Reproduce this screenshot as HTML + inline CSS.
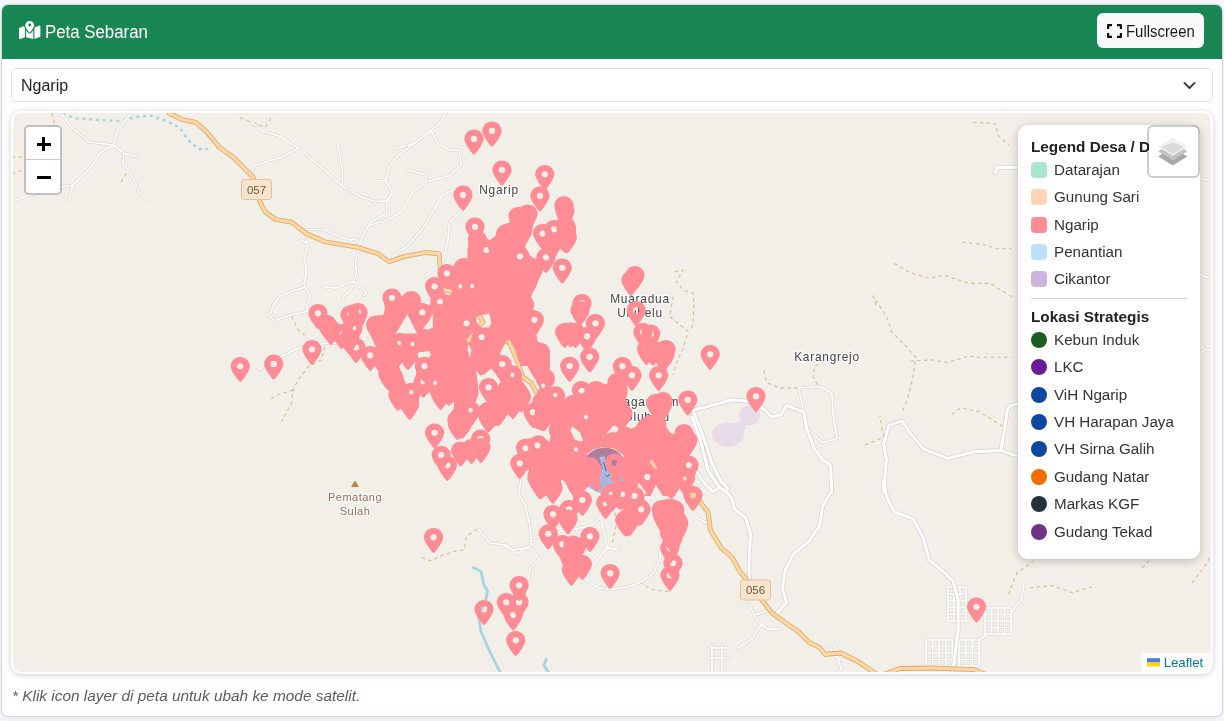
<!DOCTYPE html>
<html><head><meta charset="utf-8">
<style>
*{box-sizing:border-box}
html,body{margin:0;padding:0}
body{width:1224px;height:721px;overflow:hidden;background:#f4f6fb;font-family:"Liberation Sans",sans-serif;color:#212529;position:relative}
.card{position:absolute;left:2px;top:4.500px;width:1220px;height:711.500px;background:#fff;border-radius:6px;box-shadow:0 0 0 1px #d3d6db,0 2px 6px rgba(0,0,0,.08);overflow:hidden}
.hdr{position:absolute;left:0;top:0;width:1220px;height:54.300px;background:#198754;color:#fff}
.hdr .ttl{position:absolute;left:43.200px;top:16px;font-size:18.300px;line-height:22px;white-space:nowrap;transform:scaleX(.92);transform-origin:0 50%}
.hdr svg.mapi{position:absolute;left:17.200px;top:16.300px}
.fsbtn{position:absolute;left:1095px;top:8.400px;width:107px;height:35.100px;background:#f8f9fa;border-radius:6px;color:#000;font-size:16px}
.fsbtn span{position:absolute;left:28.600px;color:#1a1a1a;top:8px;line-height:20px;font-size:16.300px;transform:scaleX(.915);transform-origin:0 50%}
.fsbtn svg{position:absolute;left:10px;top:11px}
.sel{position:absolute;left:9.250px;top:63.500px;width:1201.500px;height:34.200px;border:1px solid #dee2e6;border-radius:5px;background:#fff}
.sel span{position:absolute;left:9px;top:6.600px;font-size:16px;line-height:20px;color:#212529}
.sel svg{position:absolute;right:15.500px;top:11.500px}
.map{position:absolute;left:9px;top:106.500px;width:1202px;height:563px;border:2px solid #fff;border-radius:10px;background:#f2efe9;overflow:hidden;box-shadow:0 1px 6px rgba(0,0,0,.2)}
.mapin{position:absolute;left:-1px;top:0;width:1200px;height:560px}
.note{position:absolute;left:10px;top:681.500px;font-size:15.400px;line-height:20px;font-style:italic;color:#565e64;white-space:nowrap}
.lay{position:absolute;left:0;top:0}
.hdr,.sel,.note,.legend,.attr,.lbl{will-change:transform}

.legend{position:absolute;left:1006.200px;top:12px;width:181.700px;height:434px;background:#fff;border-radius:10px;box-shadow:0 2px 10px rgba(0,0,0,.22);color:#333}
.legend .lt{position:absolute;left:13px;font-weight:bold;font-size:15.300px;line-height:16px;color:#222;white-space:nowrap}
.legend .li{position:absolute;left:36px;font-size:15.200px;line-height:18px;white-space:nowrap;color:#333}
.legend .sw{position:absolute;left:13.300px;width:16px;height:16px;border-radius:4px}
.legend .sw.dot{border-radius:50%}
.legend .hr{position:absolute;left:13px;width:156px;height:1px;background:#ccc}
.zc{position:absolute;left:12.400px;top:12.200px;width:37.600px;height:70.200px;border:2.200px solid rgba(0,0,0,.2);border-radius:5px;background-clip:padding-box;background:#fff;background-clip:padding-box}
.zc .zb{position:absolute;left:0;top:0;width:33.200px;height:33px}
.zc .zb i{position:absolute;background:#000}
.lc{position:absolute;left:1135.200px;top:12.200px;width:52.400px;height:52.600px;border:2.200px solid rgba(0,0,0,.2);border-radius:6px;background:#fff;background-clip:padding-box}
.attr{position:absolute;right:1px;bottom:1px;width:70px;height:19px;background:rgba(255,255,255,.8);font-size:13.200px;color:#0078a8}
.attr span{position:absolute;left:22.700px;top:2px;line-height:15px}
</style></head><body>
<div class="card">
 <div class="hdr">
  <svg class="mapi" width="21.400" height="18.400" viewBox="0 0 576 512" preserveAspectRatio="none"><path fill="#fff" d="M408 120c0 54.600-73.100 151.900-105.200 192c-7.700 9.600-22 9.600-29.600 0C241.100 271.900 168 174.600 168 120C168 53.700 221.700 0 288 0s120 53.700 120 120zm8 80.400c3.500-6.900 6.700-13.800 9.600-20.600c.5-1.200 1-2.500 1.500-3.700l116-46.400C558.900 123.400 576 135 576 152V422.800c0 9.800-6 18.600-15.100 22.300L416 503V200.400zM137.600 138.300c2.400 14.100 7.200 28.300 12.800 41.500c2.900 6.800 6.100 13.700 9.600 20.600V451.800L32.900 502.700C17.100 509 0 497.400 0 480.400V209.600c0-9.800 6-18.600 15.100-22.300l122.600-49zM327.800 332c13.900-17.400 35.700-45.700 56.200-77V504.300L192 449.400V255c20.500 31.300 42.300 59.600 56.200 77c20.500 25.600 59.100 25.600 79.600 0zM288 152a40 40 0 1 0 0-80 40 40 0 1 0 0 80z"/></svg>
  <div class="ttl">Peta Sebaran</div>
  <div class="fsbtn"><svg width="15" height="14" viewBox="0 0 15 14"><path fill="none" stroke="#111" stroke-width="2.2" stroke-linejoin="round" d="M1.1 5V1.1H5M10 1.1h3.9V5M13.900 9v3.900H10M5 12.900H1.100V9"/></svg><span>Fullscreen</span></div>
 </div>
 <div class="sel"><span>Ngarip</span><svg width="13" height="9.300" viewBox="0 0 14 10"><path fill="none" stroke="#343a40" stroke-width="2" stroke-linecap="round" stroke-linejoin="round" d="M1.500 2l5.500 5.500L12.500 2"/></svg></div>
 <div class="map" id="map"><div class="mapin">
<svg class="lay" width="1200" height="560" viewBox="0 0 1200 560">
<g fill="none" stroke-linecap="round" stroke-linejoin="round">
<ellipse cx="716" cy="321.4" rx="16" ry="12" fill="#e8dbe8"/><ellipse cx="737.5" cy="302.5" rx="10.5" ry="10" fill="#e8dbe8"/><ellipse cx="728" cy="313" rx="6" ry="5" fill="#e8dbe8"/>
<path stroke="#d3bd8e" stroke-width="1.100" stroke-dasharray="3.600 3.200" stroke-linecap="butt" d="M40.0 0.0 L42.6 10.6M0.0 44.0 L10.6 44.0M0.0 61.0 L10.6 57.0M109.0 69.0 L114.5 60.0M228.0 4.7 L239.6 9.3 L253.6 14.0 L260.6 2.3M863.7 187.0 L874.4 203.0 L879.7 219.0 L893.0 232.3 L903.6 244.2 L901.0 264.2 L895.7 285.5 L890.3 298.8M898.3 248.2 L919.6 246.9 L935.6 249.6 L956.9 242.9 L964.9 244.2 L1000.0 244.2M751.9 257.6 L754.5 269.5 L767.8 274.9 L785.2 274.9M818.4 244.2 L802.5 253.6 L801.1 264.2 L806.5 273.5M853.0 332.1 L871.7 324.1 L867.7 302.8M939.6 301.5 L948.9 294.8 L967.5 298.8 L992.8 314.8M960.9 9.3 L983.5 10.6 L986.2 22.6 L996.8 32.0M950.2 129.1 L972.9 131.8 L983.5 135.8 L999.5 135.8M882.3 150.4 L898.3 159.7 L917.0 165.1 L933.0 162.4 L956.9 170.4 L978.2 170.4 L999.5 183.7M861.0 182.4 L863.7 192.0M662.8 158.6 L671.1 157.0 L664.5 168.6 L671.1 177.0 L681.1 180.3 L681.9 191.9 L681.1 208.6 L679.4 216.9M661.1 183.6 L657.8 203.6 L667.8 211.9 L676.1 218.5 L671.1 235.2 L664.5 250.2 L661.1 261.8M279.5 203.6 L286.2 217.0 L292.8 222.0M312.8 233.6 L309.5 246.9 L296.2 253.6 L286.2 266.9 L281.2 276.8 L279.5 290.2 L269.6 308.5M281.2 276.8 L266.2 281.8 L257.9 286.2M1130.0 455.0 L1145.0 440.0 L1150.0 430.0M1180.0 470.0 L1195.0 450.0 L1200.0 440.0M602.1 392.6 L604.5 411.3 L599.8 432.2M627.8 469.5 L639.4 476.5 L658.0 478.8M513.6 464.8 L513.6 483.5M409.7 444.4 L418.0 447.8 L431.3 441.9 L444.6 437.8 L452.0 437.0 L454.6 423.6 L464.6 416.0M1017.9 474.8 L1040.8 472.5 L1060.4 479.7 L1080.0 473.8M996.6 481.3 L1004.8 460.0 L1021.0 448.6"/>
<path stroke="#aad3df" stroke-width="2.600" stroke-linecap="butt" stroke-dasharray="3 3.800" d="M50.6 1.3 L63.9 5.3 L82.5 6.7 L106.5 8.0 L125.0 4.0 L138.4 2.7 L154.4 8.0 L167.7 14.6 L175.7 26.6 L186.4 36.0 L195.7 36.0"/>
<path stroke="#aad3df" stroke-width="2.800" d="M461.2 454.5 L469.0 458.4 L471.7 471.4 L475.6 478.0 L473.0 489.7 L466.4 502.8 L469.0 518.5 L476.9 536.8 L484.7 552.5 L488.7 560.0M534.4 546.0 L531.8 552.5 L537.0 560.0"/>
<path stroke="#d9d7d3" stroke-width="2.900" d="M49.0 0.0 L61.0 16.0 L77.0 29.0 L101.0 32.0 L106.5 16.0 L117.0 2.7 L120.0 0.0M101.0 32.0 L88.0 40.0 L80.0 53.0 L72.0 61.0 L61.0 72.0 L57.0 86.5M61.0 72.0 L34.6 77.0 L16.0 82.5 L5.0 86.5M101.0 32.0 L112.0 40.0 L125.0 44.0M112.0 40.0 L110.5 52.0 L117.0 57.0 L122.5 69.0 L128.0 80.0 L134.5 86.5M239.6 9.3 L251.3 18.6 L267.6 23.3 L286.2 35.0 L300.2 46.6 L316.5 60.6 L330.5 73.4 L349.1 83.9 L363.1 88.5 L377.1 87.4M286.2 35.0 L269.9 44.3 L242.0 52.4 L240.8 58.2M325.8 31.4 L330.5 58.2 L330.5 73.4M434.1 0.0 L428.3 9.3 L419.0 17.5 L402.7 30.3 L386.4 41.9 L377.1 53.6 L373.6 67.6 L380.6 79.2 L374.7 88.5 L374.7 100.2 L358.4 109.5 L349.1 125.8 L344.5 144.4M402.7 30.3 L381.7 36.1M373.6 67.6 L363.1 67.6M419.0 17.5 L426.0 30.3 L437.6 37.3 L447.0 37.3 L449.3 51.2 L437.6 62.9 L414.3 68.7 L400.4 79.2 L391.0 97.8 L374.7 107.2 L358.4 111.8M395.7 57.1 L414.3 61.7 L414.3 68.7M442.3 76.9 L430.7 81.5 L421.3 97.8 L409.7 116.5 L395.7 132.8 L381.7 142.1 L379.4 146.7M449.3 97.8 L437.6 109.5 L435.3 130.4 L430.7 149.0 L414.3 163.0M290.9 116.5 L311.9 116.5 L321.2 121.1 L337.5 127.0 L344.5 125.8M288.6 127.0 L295.5 130.4M246.3 256.9 L262.9 246.9 L286.2 235.3 L312.8 230.3 L332.8 230.3 L356.1 225.3M293.7 127.0 L296.2 132.0 L292.0 145.3 L294.5 156.9 L292.0 171.9 L296.2 178.6 L297.9 183.6 L294.5 195.2 L296.2 199.4M292.0 174.4 L281.2 177.7 L267.9 183.6 L261.3 191.9 L257.9 203.5 L262.1 207.7 L276.2 202.7 L294.5 198.5M344.5 144.4 L343.6 150.3 L344.5 160.3 L342.0 168.6 L334.5 170.2 L324.5 175.2 L316.2 174.4 L311.2 173.6M342.0 168.6 L346.1 173.6 L352.8 176.9 L354.4 180.2 L351.9 182.7M342.0 171.9 L337.8 178.6 L332.0 182.7 L331.1 186.0M509.0 367.0 L506.6 381.0 L513.6 392.6 L517.1 409.0 L519.4 425.2 L518.3 434.5 L502.0 436.9 L488.0 431.0M518.3 434.5 L527.6 446.2 L518.3 455.5 L516.0 467.2M519.4 425.2 L534.6 421.7 L548.6 418.2 L564.9 415.9 L581.2 411.3 L588.2 404.3 L589.0 392.0 L588.0 385.0M588.2 404.3 L592.8 420.6 L595.2 434.6 L585.8 446.2 L576.5 460.2 L574.2 467.2 L585.8 474.2 L597.5 476.5 L613.8 474.2 L627.8 469.5 L641.7 460.2 L647.6 446.2 L648.7 434.6 L650.0 420.0M595.2 434.6 L606.8 436.9M674.4 411.3 L683.7 404.3 L695.3 410.1M466.2 416.0 L477.9 430.3 L494.5 432.0 L504.5 441.0 L516.2 433.6M737.2 490.5 L744.2 506.8 L755.9 516.1 L767.5 516.1M741.9 502.1 L758.2 497.4 L767.5 504.4M748.9 511.4 L740.7 525.4 L725.6 535.0M696.0 535.0 L717.0 535.0M696.0 545.0 L717.0 545.0M700.0 532.0 L700.0 559.0M710.0 532.0 L710.0 559.0M818.0 535.0 L825.0 545.0 L840.0 550.0M822.0 530.0 L830.0 560.0M1187.0 65.0 L1192.0 67.0 L1200.0 66.0M1187.0 160.0 L1193.0 164.0 L1200.0 163.0M1188.0 240.0 L1194.0 236.0 L1200.0 238.0M786.5 274.9 L807.8 273.5 L819.8 280.2 L821.1 301.5 L825.1 325.4 L810.5 329.4 L794.5 314.8M786.5 274.9 L791.8 298.8M914.0 527.0 L914.0 553.0M920.6 527.0 L920.6 553.0M927.2 527.0 L927.2 553.0M933.9 527.0 L933.9 553.0M940.5 527.0 L940.5 553.0M947.1 527.0 L947.1 553.0M953.8 527.0 L953.8 553.0M960.4 527.0 L960.4 553.0M967.0 527.0 L967.0 553.0M914.0 527.0 L967.0 527.0M914.0 533.5 L967.0 533.5M914.0 540.0 L967.0 540.0M914.0 546.5 L967.0 546.5M914.0 553.0 L967.0 553.0M936.0 474.0 L936.0 508.0M942.0 474.0 L942.0 508.0M948.0 474.0 L948.0 508.0M954.0 474.0 L954.0 508.0M936.0 474.0 L954.0 474.0M936.0 480.8 L954.0 480.8M936.0 487.6 L954.0 487.6M936.0 494.4 L954.0 494.4M936.0 501.2 L954.0 501.2M936.0 508.0 L954.0 508.0M973.0 495.0 L973.0 521.0M979.5 495.0 L979.5 521.0M986.0 495.0 L986.0 521.0M992.5 495.0 L992.5 521.0M999.0 495.0 L999.0 521.0M973.0 495.0 L999.0 495.0M973.0 501.5 L999.0 501.5M973.0 508.0 L999.0 508.0M973.0 514.5 L999.0 514.5M973.0 521.0 L999.0 521.0M954.0 490.0 L973.0 497.0M967.0 527.0 L975.0 521.0M999.0 500.0 L1010.0 485.0 L1012.0 470.0"/>
<path stroke="#ffffff" stroke-width="1.600" d="M49.0 0.0 L61.0 16.0 L77.0 29.0 L101.0 32.0 L106.5 16.0 L117.0 2.7 L120.0 0.0M101.0 32.0 L88.0 40.0 L80.0 53.0 L72.0 61.0 L61.0 72.0 L57.0 86.5M61.0 72.0 L34.6 77.0 L16.0 82.5 L5.0 86.5M101.0 32.0 L112.0 40.0 L125.0 44.0M112.0 40.0 L110.5 52.0 L117.0 57.0 L122.5 69.0 L128.0 80.0 L134.5 86.5M239.6 9.3 L251.3 18.6 L267.6 23.3 L286.2 35.0 L300.2 46.6 L316.5 60.6 L330.5 73.4 L349.1 83.9 L363.1 88.5 L377.1 87.4M286.2 35.0 L269.9 44.3 L242.0 52.4 L240.8 58.2M325.8 31.4 L330.5 58.2 L330.5 73.4M434.1 0.0 L428.3 9.3 L419.0 17.5 L402.7 30.3 L386.4 41.9 L377.1 53.6 L373.6 67.6 L380.6 79.2 L374.7 88.5 L374.7 100.2 L358.4 109.5 L349.1 125.8 L344.5 144.4M402.7 30.3 L381.7 36.1M373.6 67.6 L363.1 67.6M419.0 17.5 L426.0 30.3 L437.6 37.3 L447.0 37.3 L449.3 51.2 L437.6 62.9 L414.3 68.7 L400.4 79.2 L391.0 97.8 L374.7 107.2 L358.4 111.8M395.7 57.1 L414.3 61.7 L414.3 68.7M442.3 76.9 L430.7 81.5 L421.3 97.8 L409.7 116.5 L395.7 132.8 L381.7 142.1 L379.4 146.7M449.3 97.8 L437.6 109.5 L435.3 130.4 L430.7 149.0 L414.3 163.0M290.9 116.5 L311.9 116.5 L321.2 121.1 L337.5 127.0 L344.5 125.8M288.6 127.0 L295.5 130.4M246.3 256.9 L262.9 246.9 L286.2 235.3 L312.8 230.3 L332.8 230.3 L356.1 225.3M293.7 127.0 L296.2 132.0 L292.0 145.3 L294.5 156.9 L292.0 171.9 L296.2 178.6 L297.9 183.6 L294.5 195.2 L296.2 199.4M292.0 174.4 L281.2 177.7 L267.9 183.6 L261.3 191.9 L257.9 203.5 L262.1 207.7 L276.2 202.7 L294.5 198.5M344.5 144.4 L343.6 150.3 L344.5 160.3 L342.0 168.6 L334.5 170.2 L324.5 175.2 L316.2 174.4 L311.2 173.6M342.0 168.6 L346.1 173.6 L352.8 176.9 L354.4 180.2 L351.9 182.7M342.0 171.9 L337.8 178.6 L332.0 182.7 L331.1 186.0M509.0 367.0 L506.6 381.0 L513.6 392.6 L517.1 409.0 L519.4 425.2 L518.3 434.5 L502.0 436.9 L488.0 431.0M518.3 434.5 L527.6 446.2 L518.3 455.5 L516.0 467.2M519.4 425.2 L534.6 421.7 L548.6 418.2 L564.9 415.9 L581.2 411.3 L588.2 404.3 L589.0 392.0 L588.0 385.0M588.2 404.3 L592.8 420.6 L595.2 434.6 L585.8 446.2 L576.5 460.2 L574.2 467.2 L585.8 474.2 L597.5 476.5 L613.8 474.2 L627.8 469.5 L641.7 460.2 L647.6 446.2 L648.7 434.6 L650.0 420.0M595.2 434.6 L606.8 436.9M674.4 411.3 L683.7 404.3 L695.3 410.1M466.2 416.0 L477.9 430.3 L494.5 432.0 L504.5 441.0 L516.2 433.6M737.2 490.5 L744.2 506.8 L755.9 516.1 L767.5 516.1M741.9 502.1 L758.2 497.4 L767.5 504.4M748.9 511.4 L740.7 525.4 L725.6 535.0M696.0 535.0 L717.0 535.0M696.0 545.0 L717.0 545.0M700.0 532.0 L700.0 559.0M710.0 532.0 L710.0 559.0M818.0 535.0 L825.0 545.0 L840.0 550.0M822.0 530.0 L830.0 560.0M1187.0 65.0 L1192.0 67.0 L1200.0 66.0M1187.0 160.0 L1193.0 164.0 L1200.0 163.0M1188.0 240.0 L1194.0 236.0 L1200.0 238.0M786.5 274.9 L807.8 273.5 L819.8 280.2 L821.1 301.5 L825.1 325.4 L810.5 329.4 L794.5 314.8M786.5 274.9 L791.8 298.8M914.0 527.0 L914.0 553.0M920.6 527.0 L920.6 553.0M927.2 527.0 L927.2 553.0M933.9 527.0 L933.9 553.0M940.5 527.0 L940.5 553.0M947.1 527.0 L947.1 553.0M953.8 527.0 L953.8 553.0M960.4 527.0 L960.4 553.0M967.0 527.0 L967.0 553.0M914.0 527.0 L967.0 527.0M914.0 533.5 L967.0 533.5M914.0 540.0 L967.0 540.0M914.0 546.5 L967.0 546.5M914.0 553.0 L967.0 553.0M936.0 474.0 L936.0 508.0M942.0 474.0 L942.0 508.0M948.0 474.0 L948.0 508.0M954.0 474.0 L954.0 508.0M936.0 474.0 L954.0 474.0M936.0 480.8 L954.0 480.8M936.0 487.6 L954.0 487.6M936.0 494.4 L954.0 494.4M936.0 501.2 L954.0 501.2M936.0 508.0 L954.0 508.0M973.0 495.0 L973.0 521.0M979.5 495.0 L979.5 521.0M986.0 495.0 L986.0 521.0M992.5 495.0 L992.5 521.0M999.0 495.0 L999.0 521.0M973.0 495.0 L999.0 495.0M973.0 501.5 L999.0 501.5M973.0 508.0 L999.0 508.0M973.0 514.5 L999.0 514.5M973.0 521.0 L999.0 521.0M954.0 490.0 L973.0 497.0M967.0 527.0 L975.0 521.0M999.0 500.0 L1010.0 485.0 L1012.0 470.0"/>
<path stroke="#d3d1cd" stroke-width="4.400" d="M680.0 297.5 L696.0 293.5 L720.0 286.8 L736.0 288.2 L751.9 296.2 L759.9 304.1 L769.2 301.5 L774.5 292.2 L783.8 296.2 L791.8 298.8 L794.5 314.8 L802.5 336.0 L810.5 346.7 L818.4 352.0 L819.8 378.7 L818.4 380.3 L810.5 393.6 L807.8 412.3 L797.1 428.2 L781.2 441.5 L773.2 457.5 L770.5 476.2 L774.5 489.5 L765.2 500.0M871.7 367.0 L871.7 378.7 L874.4 346.7 L871.7 330.8 L877.0 312.1 L890.3 308.1 L898.3 320.1 L911.6 336.1 L935.6 345.4 L962.2 338.8 L988.8 337.4 L1000.0 341.4 L1010.0 343.0M988.8 337.4 L992.8 314.8 L995.5 296.2 L1000.0 292.2 L1010.0 290.0M680.0 304.1 L688.0 325.4 L696.0 357.4 L706.6 373.4 L714.6 379.0 L720.0 385.6 L722.6 396.3 L733.2 404.3 L738.6 420.2 L737.2 444.2 L737.2 466.8M682.0 300.0 L690.0 320.0 L700.0 350.0 L709.0 368.0 L716.0 376.0M680.0 352.0 L690.6 368.0 L701.3 379.0 L706.6 375.0M871.7 367.0 L874.4 383.0 L882.3 399.0 L901.0 405.6 L911.6 425.6 L917.0 446.9 L930.3 457.5 L940.9 468.2 L946.2 486.8 L946.2 516.0 L943.6 537.4 L940.9 559.0M983.5 59.9 L984.8 54.6 L1000.0 54.6 L1010.0 54.0"/>
<path stroke="#ffffff" stroke-width="3" d="M680.0 297.5 L696.0 293.5 L720.0 286.8 L736.0 288.2 L751.9 296.2 L759.9 304.1 L769.2 301.5 L774.5 292.2 L783.8 296.2 L791.8 298.8 L794.5 314.8 L802.5 336.0 L810.5 346.7 L818.4 352.0 L819.8 378.7 L818.4 380.3 L810.5 393.6 L807.8 412.3 L797.1 428.2 L781.2 441.5 L773.2 457.5 L770.5 476.2 L774.5 489.5 L765.2 500.0M871.7 367.0 L871.7 378.7 L874.4 346.7 L871.7 330.8 L877.0 312.1 L890.3 308.1 L898.3 320.1 L911.6 336.1 L935.6 345.4 L962.2 338.8 L988.8 337.4 L1000.0 341.4 L1010.0 343.0M988.8 337.4 L992.8 314.8 L995.5 296.2 L1000.0 292.2 L1010.0 290.0M680.0 304.1 L688.0 325.4 L696.0 357.4 L706.6 373.4 L714.6 379.0 L720.0 385.6 L722.6 396.3 L733.2 404.3 L738.6 420.2 L737.2 444.2 L737.2 466.8M682.0 300.0 L690.0 320.0 L700.0 350.0 L709.0 368.0 L716.0 376.0M680.0 352.0 L690.6 368.0 L701.3 379.0 L706.6 375.0M871.7 367.0 L874.4 383.0 L882.3 399.0 L901.0 405.6 L911.6 425.6 L917.0 446.9 L930.3 457.5 L940.9 468.2 L946.2 486.8 L946.2 516.0 L943.6 537.4 L940.9 559.0M983.5 59.9 L984.8 54.6 L1000.0 54.6 L1010.0 54.0"/>
<path stroke="#d9a861" stroke-width="4.800" d="M157.0 0.0 L170.4 6.7 L183.7 9.3 L194.4 18.6 L207.7 34.6 L221.0 44.0 L231.6 54.6 L241.0 64.0 L247.6 87.9 L253.0 98.5 L263.6 106.5 L279.6 109.2 L295.0 121.0 L313.5 129.0 L345.2 134.2 L366.3 140.8 L376.9 148.7 L392.7 143.4 L413.8 139.5 L427.0 140.8 L428.3 155.3 L432.3 176.4 L440.0 179.0 L450.0 185.0 L463.0 195.0 L471.0 209.0 L464.0 215.0 L456.0 227.0 L468.0 233.0 L483.0 229.0 L497.0 228.5 L502.8 242.0 L507.8 255.0 L511.0 264.0 L519.0 270.0 L524.5 279.6 L548.0 302.0 L589.0 331.0 L638.0 347.0 L645.0 356.0 L668.0 372.0 L681.0 382.0 L685.3 385.6 L696.0 399.0 L698.6 417.6 L709.3 435.0 L720.0 444.2 L728.0 458.9 L737.2 469.5 L750.6 488.0 L760.0 500.0 L773.0 509.4 L786.5 518.8 L797.0 529.4 L807.8 534.7 L813.0 541.4 L829.0 540.0 L845.0 548.0 L861.0 558.7 L866.0 562.0M870.0 562.0 L878.4 559.0 L887.7 555.5 L919.6 555.0 L962.2 556.6 L975.0 562.0"/>
<path stroke="#fcd6a4" stroke-width="3.200" d="M157.0 0.0 L170.4 6.7 L183.7 9.3 L194.4 18.6 L207.7 34.6 L221.0 44.0 L231.6 54.6 L241.0 64.0 L247.6 87.9 L253.0 98.5 L263.6 106.5 L279.6 109.2 L295.0 121.0 L313.5 129.0 L345.2 134.2 L366.3 140.8 L376.9 148.7 L392.7 143.4 L413.8 139.5 L427.0 140.8 L428.3 155.3 L432.3 176.4 L440.0 179.0 L450.0 185.0 L463.0 195.0 L471.0 209.0 L464.0 215.0 L456.0 227.0 L468.0 233.0 L483.0 229.0 L497.0 228.5 L502.8 242.0 L507.8 255.0 L511.0 264.0 L519.0 270.0 L524.5 279.6 L548.0 302.0 L589.0 331.0 L638.0 347.0 L645.0 356.0 L668.0 372.0 L681.0 382.0 L685.3 385.6 L696.0 399.0 L698.6 417.6 L709.3 435.0 L720.0 444.2 L728.0 458.9 L737.2 469.5 L750.6 488.0 L760.0 500.0 L773.0 509.4 L786.5 518.8 L797.0 529.4 L807.8 534.7 L813.0 541.4 L829.0 540.0 L845.0 548.0 L861.0 558.7 L866.0 562.0M870.0 562.0 L878.4 559.0 L887.7 555.5 L919.6 555.0 L962.2 556.6 L975.0 562.0"/>
</g>
</svg>
<svg class="lay lbl" width="1200" height="560" viewBox="0 0 1200 560">
<rect x="229.5" y="66.5" width="30" height="20" rx="2.500" fill="#f6e4cf" stroke="#e3c19c" stroke-width="1"/><text x="244.5" y="80.7" font-size="11.500" fill="#6e5634" text-anchor="middle" font-family="Liberation Sans,sans-serif">057</text>
<rect x="728.5" y="467.0" width="30" height="20" rx="2.500" fill="#f6e4cf" stroke="#e3c19c" stroke-width="1"/><text x="743.5" y="481.2" font-size="11.500" fill="#6e5634" text-anchor="middle" font-family="Liberation Sans,sans-serif">056</text>
<text x="487.0" y="81.0" font-family="Liberation Sans,sans-serif" font-size="11.9" text-anchor="middle" letter-spacing="0.75" stroke="#fff" stroke-opacity=".8" stroke-width="2.400" stroke-linejoin="round" fill="none">Ngarip</text><text x="487.0" y="81.0" font-family="Liberation Sans,sans-serif" font-size="11.9" text-anchor="middle" letter-spacing="0.75" fill="#444">Ngarip</text>
<text x="628.0" y="189.5" font-family="Liberation Sans,sans-serif" font-size="11.9" text-anchor="middle" letter-spacing="0.75" stroke="#fff" stroke-opacity=".8" stroke-width="2.400" stroke-linejoin="round" fill="none">Muaradua</text><text x="628.0" y="189.5" font-family="Liberation Sans,sans-serif" font-size="11.9" text-anchor="middle" letter-spacing="0.75" fill="#444">Muaradua</text>
<text x="628.0" y="204.0" font-family="Liberation Sans,sans-serif" font-size="11.9" text-anchor="middle" letter-spacing="0.75" stroke="#fff" stroke-opacity=".8" stroke-width="2.400" stroke-linejoin="round" fill="none">Ulubelu</text><text x="628.0" y="204.0" font-family="Liberation Sans,sans-serif" font-size="11.9" text-anchor="middle" letter-spacing="0.75" fill="#444">Ulubelu</text>
<text x="635.0" y="293.3" font-family="Liberation Sans,sans-serif" font-size="11.9" text-anchor="middle" letter-spacing="0.75" stroke="#fff" stroke-opacity=".8" stroke-width="2.400" stroke-linejoin="round" fill="none">Pagaralam</text><text x="635.0" y="293.3" font-family="Liberation Sans,sans-serif" font-size="11.9" text-anchor="middle" letter-spacing="0.75" fill="#444">Pagaralam</text>
<text x="635.0" y="308.3" font-family="Liberation Sans,sans-serif" font-size="11.9" text-anchor="middle" letter-spacing="0.75" stroke="#fff" stroke-opacity=".8" stroke-width="2.400" stroke-linejoin="round" fill="none">Ulubelu</text><text x="635.0" y="308.3" font-family="Liberation Sans,sans-serif" font-size="11.9" text-anchor="middle" letter-spacing="0.75" fill="#444">Ulubelu</text>
<text x="815.0" y="247.5" font-family="Liberation Sans,sans-serif" font-size="11.9" text-anchor="middle" letter-spacing="0.75" stroke="#fff" stroke-opacity=".8" stroke-width="2.400" stroke-linejoin="round" fill="none">Karangrejo</text><text x="815.0" y="247.5" font-family="Liberation Sans,sans-serif" font-size="11.9" text-anchor="middle" letter-spacing="0.75" fill="#444">Karangrejo</text>
<text x="343.0" y="388.0" font-family="Liberation Sans,sans-serif" font-size="11" text-anchor="middle" letter-spacing="0.5" stroke="#fff" stroke-opacity=".8" stroke-width="2.400" stroke-linejoin="round" fill="none">Pematang</text><text x="343.0" y="388.0" font-family="Liberation Sans,sans-serif" font-size="11" text-anchor="middle" letter-spacing="0.5" fill="#8f6d55">Pematang</text>
<text x="343.0" y="401.5" font-family="Liberation Sans,sans-serif" font-size="11" text-anchor="middle" letter-spacing="0.5" stroke="#fff" stroke-opacity=".8" stroke-width="2.400" stroke-linejoin="round" fill="none">Sulah</text><text x="343.0" y="401.5" font-family="Liberation Sans,sans-serif" font-size="11" text-anchor="middle" letter-spacing="0.5" fill="#8f6d55">Sulah</text>
<path d="M343 367.500l4 6.500h-8z" fill="#c77f3e"/>
</svg>
<svg class="lay" width="1200" height="560" viewBox="0 0 1200 560">
<defs><clipPath id="cc"><circle cx="592.4" cy="357.5" r="22.8"/></clipPath></defs>
<circle cx="592.4" cy="357.5" r="22.8" fill="#a9b9d9"/>
<g clip-path="url(#cc)"><path d="M562.4 327.5H622.4V356.0H562.4Z" fill="#b17b9e"/></g>
<path d="M588.1999999999999 347.5L593.6 347.0L597.9 361.0L595.4 364.0L590.9 355.5Z" fill="#a8c0e4"/>
<path d="M591.6 349.5L594.1999999999999 358.0M594.0 362.1L595.6 363.5L597.6999999999999 361.1" fill="none" stroke="#2a53ad" stroke-width="0.900" stroke-linecap="round"/>
<circle cx="590.1999999999999" cy="344.7" r="2.700" fill="#a8c0e4"/>
<path d="M587.8 344.0A2.700 2.700 0 0 1 592.6999999999999 343.3Z" fill="#8f9a78"/>
</svg>
<svg class="lay" width="1200" height="560" viewBox="0 0 1200 560">
<defs><symbol id="p" viewBox="0 0 384 512" preserveAspectRatio="none" overflow="visible"><path d="M215.7 499.2C267 435 384 279.4 384 192C384 86 298 0 192 0S0 86 0 192c0 87.4 117 243 168.3 307.2c12.3 15.300 35.100 15.300 47.400 0zM192 128a64 64 0 1 1 0 128 64 64 0 1 1 0-128z" fill="#ff8b94" fill-rule="evenodd"/></symbol></defs>
<path fill="#ff8b94" fill-rule="evenodd" d="M654.4 386.1 648.9 387.4 646.9 388.6 642.9 392.6 641.1 395.9 640.6 397.6 640.6 402.6 642.1 407.1 645.6 413.9 648.1 417.9 653.1 428.1 658.4 435.9 659.9 437.4 661.1 437.6 663.1 435.9 665.9 432.1 672.9 421.1 675.1 416.1 675.4 409.9 673.1 404.6 671.9 397.4 668.9 391.1 666.9 389.1 663.9 387.1 659.1 386.1ZM349.1 191.6 346.6 191.1 342.6 191.1 340.1 191.6 336.4 193.1 334.4 194.4 332.4 196.4 330.6 200.1 330.6 204.1 331.9 209.1 330.6 211.6 328.9 212.6 326.6 214.9 325.1 217.6 324.9 222.1 326.9 226.6 332.1 234.4 334.6 237.4 337.1 239.6 338.1 239.4 340.6 236.4 340.4 233.9 341.1 232.4 342.4 231.4 344.4 230.9 346.6 226.6 347.9 222.6 349.6 214.6 353.1 207.9 354.9 202.9 354.6 197.6 353.1 194.9 351.1 192.9ZM328.9 218.1 330.1 218.4 331.4 219.9 331.1 221.6 329.6 222.9 328.4 222.6 327.1 221.1 327.4 219.4ZM342.1 212.9 343.6 213.1 344.9 214.6 344.6 216.4 343.1 217.6 341.6 217.4 340.4 215.9 340.6 214.1ZM336.6 198.4 337.9 198.4 339.4 200.1 339.1 201.6 337.9 202.9 336.6 202.9 335.1 201.1 335.4 199.6ZM347.4 196.4 348.9 196.6 350.1 198.1 349.9 199.6 348.4 200.9 346.9 200.6 345.6 199.1 345.9 197.6ZM556.9 103.4 554.4 102.9 551.9 102.9 549.4 103.4 547.4 104.6 544.9 107.4 540.9 107.9 534.6 112.6 531.6 112.4 529.1 112.9 527.1 114.1 525.1 116.1 523.6 118.9 523.4 123.6 526.6 130.9 529.6 135.6 530.6 136.6 533.1 141.1 533.4 140.9 535.6 141.1 537.4 142.9 537.6 145.1 536.9 146.4 538.6 147.9 539.6 147.6 541.4 145.9 544.6 141.4 547.9 135.6 551.6 139.1 553.4 139.9 554.6 139.6 556.4 137.9 557.4 136.1 559.1 134.1 563.6 126.1 564.1 123.1 563.9 113.6 562.4 109.4 560.9 106.6 558.9 104.6ZM529.9 117.1 531.1 117.1 532.6 117.9 533.9 119.9 533.6 122.1 532.6 123.4 531.1 124.1 529.9 124.1 528.4 123.4 527.1 121.4 527.4 119.1 528.4 117.9ZM541.1 112.9 543.4 113.1 545.1 114.9 545.4 115.6 545.1 117.9 543.4 119.6 542.6 119.9 540.4 119.6 538.6 117.9 538.4 117.1 538.6 114.9 540.4 113.1ZM505.1 94.6 502.6 96.1 500.4 98.4 498.1 102.1 497.9 109.4 492.4 110.9 490.4 112.1 486.1 116.9 484.6 119.6 483.9 121.9 478.6 127.4 474.1 124.9 471.4 121.9 469.4 120.6 466.9 120.1 464.4 120.1 461.9 120.6 459.9 121.9 457.4 124.6 456.1 127.6 456.1 131.1 456.6 132.9 455.4 135.6 455.4 145.6 455.1 145.9 450.1 145.6 447.6 146.1 445.6 147.4 443.4 149.6 441.1 153.9 438.4 153.1 435.6 153.1 433.1 153.6 431.1 154.9 428.6 157.6 427.4 160.6 427.4 164.6 427.1 164.9 423.4 164.9 420.9 165.4 418.9 166.6 416.9 168.6 414.9 172.4 414.6 177.1 417.1 182.6 419.6 186.6 420.6 187.6 416.6 192.9 413.1 191.9 410.6 190.6 409.6 190.6 409.1 189.9 408.6 187.6 407.1 184.9 405.1 182.9 403.1 181.6 400.6 181.1 397.4 181.1 394.9 181.6 392.1 183.4 391.1 183.6 388.9 182.6 387.1 180.9 385.1 179.6 382.6 179.1 380.1 179.1 377.6 179.6 375.6 180.9 373.6 182.9 371.9 186.6 371.9 190.4 373.1 194.9 371.1 202.4 370.9 202.6 364.6 202.9 360.6 203.9 358.6 205.1 356.4 207.4 354.6 211.1 354.9 215.9 359.6 224.4 363.9 234.1 361.1 236.6 359.9 238.9 361.1 240.1 361.9 241.6 361.6 243.6 359.9 245.6 363.4 251.9 370.4 261.6 373.4 267.1 376.6 271.6 378.1 273.1 378.1 281.9 380.1 286.4 385.4 294.1 387.4 295.9 388.6 295.6 395.9 304.1 396.4 304.4 397.4 304.1 399.4 302.1 402.6 297.6 406.4 290.9 406.9 289.1 407.6 279.6 408.1 278.6 412.4 282.9 413.6 282.6 417.9 278.6 420.9 284.9 422.4 286.9 422.9 288.1 426.1 292.6 428.4 294.6 429.4 294.4 431.4 292.4 432.6 290.4 435.9 291.4 437.1 291.4 441.6 288.9 441.9 289.1 441.9 294.1 442.1 294.4 441.9 295.6 436.6 302.1 435.4 305.1 435.4 308.6 438.6 315.6 443.1 322.4 446.4 325.6 448.1 325.9 451.6 324.9 453.4 323.1 454.4 321.4 456.1 319.4 458.6 315.4 463.1 306.4 463.6 304.4 463.4 298.6 462.4 296.6 460.6 294.4 463.9 288.6 466.4 281.4 466.1 272.4 463.9 256.6 464.1 255.4 470.9 261.9 472.1 261.6 479.1 255.6 484.1 261.6 485.9 264.4 487.6 266.1 487.9 267.6 488.6 268.9 485.9 272.9 483.1 273.4 481.1 274.6 478.6 277.4 477.4 280.4 477.4 283.9 479.1 287.6 472.4 289.4 470.4 290.6 467.6 293.6 465.9 297.6 466.1 302.4 468.1 306.4 472.1 312.6 474.9 316.4 477.1 318.4 478.1 318.1 483.1 312.9 487.1 312.6 491.4 307.4 495.1 300.9 498.9 304.1 499.9 303.9 502.1 301.4 505.9 295.6 507.9 296.6 509.9 294.9 513.1 290.4 516.9 283.6 517.1 282.6 516.9 278.1 515.9 276.1 509.9 267.6 509.9 263.9 508.1 260.1 505.4 257.4 503.4 256.1 500.9 255.6 497.9 255.6 497.6 255.1 498.4 253.9 498.4 253.1 492.9 253.1 491.6 254.4 489.4 254.6 487.9 253.9 486.9 252.9 486.4 249.6 487.6 247.1 488.4 239.4 493.6 228.9 497.9 225.9 503.4 236.6 508.6 252.9 515.4 252.9 519.1 260.1 523.9 267.4 523.9 268.1 525.6 271.6 528.1 275.4 525.9 277.6 524.4 280.9 521.6 283.9 520.6 285.9 520.4 288.9 517.6 291.1 514.6 294.4 513.4 297.4 513.6 301.9 517.4 308.6 520.6 313.1 522.4 314.9 530.4 317.9 532.4 317.9 534.6 315.9 538.4 310.6 538.6 310.9 536.9 314.9 536.9 318.4 538.6 323.4 537.6 328.1 537.1 328.6 535.4 327.6 532.4 324.4 530.4 323.1 527.9 322.6 525.4 322.6 522.9 323.1 519.6 325.1 515.9 325.6 510.9 326.9 508.9 328.1 506.9 330.1 505.4 332.9 505.1 339.4 505.4 339.6 505.6 344.6 506.9 347.1 507.4 346.9 509.4 347.1 511.1 348.9 511.4 350.9 510.4 352.6 512.6 355.9 514.6 357.6 515.6 357.4 516.9 356.1 517.1 356.4 515.4 363.1 515.4 366.9 518.9 374.1 525.9 384.4 527.9 386.1 529.4 385.9 534.6 382.1 537.9 385.9 538.4 386.1 539.4 385.9 541.6 383.4 546.1 376.6 547.9 373.1 549.1 367.1 549.6 366.4 553.1 368.9 554.4 372.1 558.1 378.9 561.4 383.4 563.4 385.1 565.1 385.6 566.6 385.4 568.4 383.6 572.9 377.1 578.6 371.6 582.4 376.4 584.1 378.1 585.4 378.4 587.9 376.1 588.1 376.9 590.4 372.9 590.9 370.4 588.1 372.4 587.9 372.1 587.9 353.1 584.4 346.1 581.4 344.6 574.6 343.9 574.4 343.6 575.6 342.1 574.4 341.6 581.1 336.6 585.9 335.6 589.1 334.1 590.6 334.4 591.9 333.9 597.4 334.9 602.6 335.4 610.9 341.6 612.6 345.1 612.4 345.6 611.9 345.4 613.4 347.6 610.6 349.1 606.4 343.6 603.6 342.6 599.9 342.9 598.6 343.4 595.1 348.1 593.9 348.9 593.6 349.9 596.1 358.9 601.6 361.6 597.4 365.6 602.1 369.6 605.4 373.6 605.1 373.9 598.6 373.9 593.9 377.9 588.1 379.4 588.1 379.9 589.6 383.1 589.9 386.4 591.6 389.9 592.4 389.1 593.6 388.9 595.1 390.1 595.4 391.9 593.9 393.4 596.9 397.6 598.9 399.4 599.9 399.1 601.9 397.1 604.1 394.1 607.6 396.6 609.9 396.6 612.4 395.6 612.9 395.9 612.6 396.6 610.9 397.6 607.4 401.4 605.4 405.9 605.4 409.6 607.4 414.1 611.9 420.9 614.1 423.4 615.6 423.6 618.4 420.9 622.6 414.6 623.1 413.4 623.6 412.9 628.4 412.6 630.6 410.1 635.1 403.4 637.1 398.9 637.1 394.9 635.1 389.6 631.9 386.1 632.4 384.9 632.4 383.1 632.6 382.9 638.4 382.9 643.9 371.9 650.9 382.9 655.4 382.9 658.6 384.9 659.9 384.6 661.6 382.9 663.6 382.9 662.4 378.9 667.9 373.4 672.9 382.1 674.4 380.9 677.1 377.1 680.6 371.6 682.4 368.1 682.9 366.4 683.1 361.4 685.6 355.4 685.6 351.1 683.9 347.4 681.6 345.1 677.1 342.9 679.4 339.4 681.9 334.4 682.9 331.1 682.6 325.9 679.4 319.1 677.4 317.1 675.4 315.9 672.9 315.4 670.4 315.4 667.9 315.9 665.9 317.1 663.9 319.1 662.9 321.1 662.1 321.4 658.6 319.9 654.4 314.4 654.1 309.9 652.6 305.9 654.4 303.9 656.9 299.9 659.6 294.1 660.1 292.4 660.1 288.6 658.9 285.6 656.4 282.9 654.4 281.6 651.9 281.1 648.4 281.1 644.9 281.9 642.4 283.4 640.4 285.4 638.9 288.1 638.6 292.9 641.9 299.9 642.9 301.1 633.1 303.9 628.4 307.1 626.1 309.4 623.6 313.9 619.1 315.6 618.4 315.6 612.6 312.6 615.9 307.9 617.9 303.9 618.1 298.9 616.1 294.6 614.6 292.4 612.1 289.9 613.1 287.9 615.6 280.4 615.6 276.9 614.9 272.4 613.4 269.6 611.4 267.6 609.4 266.4 606.9 265.9 604.4 265.9 601.9 266.4 599.9 267.6 598.4 269.1 593.4 271.6 588.6 269.4 586.1 268.9 581.9 268.9 579.4 269.4 575.9 271.6 574.1 271.1 570.9 271.1 568.4 271.6 566.4 272.9 563.9 275.6 562.6 278.6 562.6 281.6 562.4 281.9 557.4 282.6 552.4 286.1 551.9 285.9 551.6 282.1 550.1 279.4 548.1 277.4 546.1 276.1 543.6 275.6 539.1 275.6 538.9 275.4 539.4 273.9 540.9 271.9 542.6 268.4 542.9 263.4 541.1 259.6 538.9 257.4 537.9 256.9 537.9 237.4 536.6 234.4 534.1 231.6 532.1 230.4 525.9 228.9 524.4 222.1 530.6 210.9 530.9 205.9 529.1 202.1 525.9 198.9 523.4 197.4 521.1 196.9 521.9 193.4 521.9 189.6 519.1 183.9 521.1 178.4 522.6 176.4 525.1 171.4 526.6 166.9 530.6 159.1 530.9 154.4 530.4 152.4 529.4 150.4 526.4 147.1 523.9 145.6 521.4 144.9 515.9 140.6 513.1 132.9 519.9 120.4 521.1 112.4 523.9 105.1 523.9 101.1 522.1 97.4 519.6 94.9 517.1 93.4 514.6 92.9 511.9 92.9ZM627.4 393.4 628.1 393.1 630.6 393.4 632.4 395.1 632.6 395.9 632.4 398.1 630.6 399.9 629.9 400.1 627.4 399.9 625.6 398.1 625.4 397.4 625.6 395.1ZM609.6 378.4 610.9 378.4 612.4 379.1 613.6 381.1 613.4 383.4 612.4 384.6 610.9 385.4 609.6 385.4 608.1 384.6 606.9 382.6 607.1 380.4 608.1 379.1ZM598.1 378.1 599.4 378.4 600.6 379.9 600.4 381.6 598.9 382.9 597.6 382.6 596.4 381.1 596.6 379.4ZM626.6 369.4 634.9 380.1 630.6 383.1 625.9 383.1 625.6 384.4 624.6 385.6 623.1 386.4 621.6 386.4 619.6 385.1 618.9 383.6 618.9 382.4 619.6 380.9 621.1 379.6 623.1 379.4 624.1 379.9 624.4 379.6 626.1 370.4ZM672.9 362.9 674.1 363.1 675.4 364.6 675.1 366.4 673.6 367.6 672.4 367.4 671.1 365.9 671.4 364.1ZM607.9 362.1 612.1 367.6 609.1 368.6 608.9 368.4 607.6 362.9ZM634.6 360.4 635.9 360.4 637.4 361.1 638.6 363.1 638.4 365.4 637.4 366.6 635.9 367.4 634.6 367.4 633.1 366.6 631.9 364.6 632.1 362.4 633.1 361.1ZM645.1 356.1 645.4 355.9 645.6 356.1 645.4 356.4ZM675.9 348.9 677.1 348.9 678.6 349.6 679.9 351.6 679.9 352.9 679.1 354.4 677.1 355.6 675.9 355.6 674.4 354.9 673.1 352.9 673.1 351.6 673.9 350.1ZM600.9 346.6 601.6 346.4 603.9 346.6 605.6 348.4 605.9 349.1 605.6 351.1 603.9 352.9 603.1 353.1 600.9 352.9 599.1 351.1 598.9 350.4 599.1 348.4ZM639.9 346.1 645.4 355.6 645.1 356.1 641.4 355.1 637.1 349.6ZM612.4 345.6 612.6 345.4 612.9 345.6 612.6 345.9ZM563.6 334.1 564.9 334.4 566.1 335.9 565.9 337.6 564.4 338.9 563.1 338.6 561.9 337.1 562.1 335.4ZM511.9 332.4 514.6 332.1 516.1 332.9 517.1 334.1 517.4 334.9 517.1 337.1 515.4 338.9 512.6 339.1 511.9 338.9 510.1 337.1 509.9 336.4 510.1 334.1ZM523.9 329.1 524.6 328.9 527.1 329.1 528.9 330.9 529.1 331.6 528.9 333.9 527.1 335.6 526.4 335.9 524.1 335.6 522.1 333.6 521.9 332.9 522.1 330.9ZM594.4 320.4 594.6 320.1 594.9 320.4 594.6 320.6ZM606.9 315.6 603.9 319.9 602.4 318.6 601.9 318.6 601.4 319.1 595.6 320.4 594.6 320.1 598.6 315.9 598.4 315.6 601.9 312.6 602.1 312.9 602.6 312.6ZM560.6 312.6 568.1 319.6 570.9 327.4 570.6 327.9 566.6 329.1 562.4 326.1 558.4 317.1ZM538.4 310.6 538.6 310.4 538.9 310.6 538.6 310.9ZM538.9 309.9 539.1 309.6 539.4 309.9 539.1 310.1ZM573.6 301.6 574.9 301.9 576.1 303.4 575.9 305.1 574.4 306.4 573.1 306.1 571.9 304.6 572.1 302.9ZM607.6 298.1 608.9 298.4 610.1 299.9 609.9 301.6 608.4 302.9 607.1 302.6 605.9 301.1 606.1 299.4ZM520.4 295.9 522.6 296.1 524.4 297.9 524.6 298.6 524.4 300.9 522.6 302.6 521.4 303.1 519.1 302.9 517.4 301.1 517.1 300.4 517.4 298.1 519.1 296.4ZM458.1 294.9 459.6 295.1 460.9 296.6 460.6 298.4 459.1 299.6 457.6 299.4 456.4 297.9 456.6 296.1ZM542.9 279.6 544.1 279.9 545.4 281.4 545.1 283.1 543.6 284.4 542.4 284.1 541.1 282.6 541.4 280.9ZM398.9 276.9 400.1 277.1 401.4 278.6 401.1 280.4 399.6 281.6 398.4 281.4 397.1 279.9 397.4 278.1ZM569.1 274.9 571.4 275.1 573.1 276.9 573.4 277.6 573.1 279.9 571.4 281.6 570.6 281.9 568.4 281.6 566.6 279.9 566.4 279.1 566.6 276.9 568.4 275.1ZM530.6 270.4 532.1 270.6 533.4 272.1 533.1 273.6 531.6 274.9 530.1 274.6 528.9 273.1 529.1 271.6ZM422.9 267.6 424.1 267.9 425.4 269.4 425.1 271.1 423.6 272.4 422.4 272.1 421.1 270.6 421.4 268.9ZM410.1 266.1 411.4 266.4 412.4 267.4 412.9 268.6 412.6 270.4 411.1 271.6 409.6 271.4 408.4 269.9 408.4 267.9ZM500.1 259.6 501.4 259.9 502.6 261.4 502.4 263.1 500.9 264.4 499.6 264.1 498.4 262.6 498.6 260.9ZM411.9 249.9 413.1 249.9 414.6 250.6 416.1 252.9 415.9 255.1 414.1 256.9 413.4 257.1 411.1 256.9 409.4 255.1 409.1 254.4 409.4 251.9 410.4 250.6ZM393.1 244.6 393.6 245.4 396.6 256.4 402.6 249.4 403.1 250.1 404.6 248.6 404.9 248.9 404.4 255.4 404.9 257.4 403.9 260.9 403.6 264.9 402.6 265.9 401.6 269.6 401.1 270.4 395.9 270.4 393.9 271.9 393.1 270.4 390.6 261.4 386.9 254.1ZM419.4 240.9 418.1 243.6 417.1 243.9 416.6 245.1 406.6 245.1 405.1 239.6 417.9 237.9 418.1 238.6 417.6 240.4ZM456.6 231.4 459.4 236.6 458.4 242.9 457.9 243.9 457.4 243.1 455.6 237.1 456.1 232.6ZM400.1 228.9 401.4 229.1 402.6 230.6 402.4 232.4 400.9 233.6 399.6 233.4 398.4 231.9 398.6 230.1ZM386.9 227.6 388.1 227.9 389.4 229.4 389.1 231.1 387.6 232.4 386.4 232.1 385.1 230.6 385.4 228.9ZM383.6 220.9 383.9 220.6 384.1 220.9 383.9 221.1ZM469.1 220.1 471.4 220.4 473.1 222.1 473.4 222.9 473.1 225.1 471.4 226.9 470.6 227.1 468.4 226.9 466.6 225.1 466.4 224.4 466.6 222.1 468.4 220.4ZM460.6 219.4 460.9 220.4 459.6 227.6 455.9 229.9 453.6 226.9 455.6 224.4ZM453.1 207.1 453.9 206.9 456.1 207.1 457.9 208.9 458.1 209.6 457.9 211.6 456.1 213.4 455.4 213.6 453.1 213.4 451.4 211.6 451.1 210.9 451.4 208.9ZM521.9 203.4 523.1 203.4 524.6 204.1 525.9 206.1 525.6 208.4 524.6 209.6 523.1 210.4 521.9 210.4 520.4 209.6 519.1 207.6 519.4 205.4 520.4 204.1ZM395.4 201.4 404.9 220.1 404.6 220.4 397.9 220.4 397.6 220.6 391.1 220.6 390.9 220.9 384.1 220.9 383.9 220.6 384.1 219.9ZM477.1 200.6 477.6 201.6 479.4 209.9 477.1 214.6 469.9 214.6 464.9 210.4 464.4 203.6ZM420.6 200.6 420.9 200.9 420.9 214.4 416.6 216.6 411.4 215.9 411.1 215.6 417.4 207.4ZM409.6 195.9 411.9 196.1 413.6 197.9 413.9 198.6 413.6 201.1 412.6 202.4 411.1 203.1 409.9 203.1 408.4 202.4 406.9 200.1 407.1 197.9 408.9 196.1ZM426.9 185.9 427.6 185.6 429.9 185.9 431.6 187.6 431.9 188.4 431.6 190.4 429.9 192.1 429.1 192.4 426.9 192.1 425.1 190.4 424.9 189.6 425.1 187.6ZM378.4 182.1 379.1 181.9 381.4 182.1 383.1 183.9 383.4 184.6 383.1 186.6 381.4 188.4 380.6 188.6 378.4 188.4 376.6 186.6 376.4 185.9 376.6 183.9ZM431.4 174.1 436.6 175.4 440.9 176.9 437.9 182.6 432.4 180.9 431.1 174.9ZM459.6 170.9 460.9 171.1 462.1 172.6 461.9 174.4 460.4 175.6 459.1 175.4 457.9 173.9 458.1 172.1ZM448.1 170.9 449.6 171.1 450.9 172.6 450.6 174.4 449.1 175.6 447.6 175.4 446.4 173.9 446.6 172.1ZM421.9 170.1 424.1 170.4 425.9 172.1 426.1 172.9 425.9 175.1 424.1 176.9 423.4 177.1 421.1 176.9 419.4 175.1 419.1 174.4 419.4 172.1 421.1 170.4ZM433.1 157.4 435.9 157.1 437.4 157.9 438.4 159.1 438.6 159.9 438.4 162.1 436.6 163.9 433.9 164.1 433.1 163.9 431.4 162.1 431.1 161.4 431.4 159.1ZM506.4 140.4 507.1 140.1 509.4 140.4 511.1 142.1 511.4 142.9 511.1 144.9 509.4 146.6 508.6 146.9 506.4 146.6 504.6 144.9 504.4 144.1 504.6 142.1ZM473.1 134.1 473.9 133.9 476.1 134.1 477.9 135.9 478.1 136.6 477.9 138.6 476.1 140.4 475.4 140.6 473.1 140.4 471.4 138.6 471.1 137.9 471.4 135.9Z"/>
<use href="#p" x="470.4" y="8.5" width="19.20" height="25.10"/>
<use href="#p" x="452.4" y="16.5" width="19.20" height="25.10"/>
<use href="#p" x="480.4" y="47.6" width="19.20" height="25.10"/>
<use href="#p" x="523.2" y="51.9" width="19.20" height="25.10"/>
<use href="#p" x="441.4" y="72.6" width="19.20" height="25.10"/>
<use href="#p" x="518.4" y="73.4" width="19.20" height="25.10"/>
<use href="#p" x="542.4" y="83.3" width="19.20" height="25.10"/>
<use href="#p" x="543.4" y="88.9" width="19.20" height="25.10"/>
<use href="#p" x="506.4" y="91.6" width="19.20" height="25.10"/>
<use href="#p" x="496.4" y="93.9" width="19.20" height="25.10"/>
<use href="#p" x="453.4" y="104.4" width="19.20" height="25.10"/>
<use href="#p" x="544.4" y="104.9" width="19.20" height="25.10"/>
<use href="#p" x="532.4" y="106.9" width="19.20" height="25.10"/>
<use href="#p" x="521.0" y="111.1" width="19.20" height="25.10"/>
<use href="#p" x="484.1" y="111.6" width="19.20" height="25.10"/>
<use href="#p" x="545.7" y="115.1" width="19.20" height="25.10"/>
<use href="#p" x="455.8" y="117.4" width="19.20" height="25.10"/>
<use href="#p" x="530.4" y="121.6" width="19.20" height="25.10"/>
<use href="#p" x="475.8" y="123.9" width="19.20" height="25.10"/>
<use href="#p" x="465.0" y="127.4" width="19.20" height="25.10"/>
<use href="#p" x="498.4" y="133.9" width="19.20" height="25.10"/>
<use href="#p" x="524.4" y="134.9" width="19.20" height="25.10"/>
<use href="#p" x="442.4" y="144.9" width="19.20" height="25.10"/>
<use href="#p" x="540.7" y="145.4" width="19.20" height="25.10"/>
<use href="#p" x="425.4" y="150.9" width="19.20" height="25.10"/>
<use href="#p" x="613.4" y="152.9" width="19.20" height="25.10"/>
<use href="#p" x="609.4" y="157.9" width="19.20" height="25.10"/>
<use href="#p" x="504.9" y="161.5" width="19.20" height="25.10"/>
<use href="#p" x="413.0" y="163.9" width="19.20" height="25.10"/>
<use href="#p" x="439.4" y="163.9" width="19.20" height="25.10"/>
<use href="#p" x="450.0" y="163.9" width="19.20" height="25.10"/>
<use href="#p" x="370.4" y="175.4" width="19.20" height="25.10"/>
<use href="#p" x="389.8" y="177.9" width="19.20" height="25.10"/>
<use href="#p" x="418.4" y="178.9" width="19.20" height="25.10"/>
<use href="#p" x="560.4" y="180.9" width="19.20" height="25.10"/>
<use href="#p" x="558.4" y="187.9" width="19.20" height="25.10"/>
<use href="#p" x="614.6" y="187.9" width="19.20" height="25.10"/>
<use href="#p" x="336.4" y="189.9" width="19.20" height="25.10"/>
<use href="#p" x="400.7" y="189.9" width="19.20" height="25.10"/>
<use href="#p" x="296.4" y="190.9" width="19.20" height="25.10"/>
<use href="#p" x="328.4" y="192.4" width="19.20" height="25.10"/>
<use href="#p" x="512.8" y="197.4" width="19.20" height="25.10"/>
<use href="#p" x="445.0" y="200.9" width="19.20" height="25.10"/>
<use href="#p" x="573.9" y="200.9" width="19.20" height="25.10"/>
<use href="#p" x="305.4" y="201.9" width="19.20" height="25.10"/>
<use href="#p" x="359.9" y="201.9" width="19.20" height="25.10"/>
<use href="#p" x="354.1" y="202.4" width="19.20" height="25.10"/>
<use href="#p" x="331.4" y="205.9" width="19.20" height="25.10"/>
<use href="#p" x="309.4" y="206.9" width="19.20" height="25.10"/>
<use href="#p" x="548.9" y="209.3" width="19.20" height="25.10"/>
<use href="#p" x="543.1" y="209.9" width="19.20" height="25.10"/>
<use href="#p" x="553.9" y="209.9" width="19.20" height="25.10"/>
<use href="#p" x="621.4" y="209.9" width="19.20" height="25.10"/>
<use href="#p" x="320.0" y="210.9" width="19.20" height="25.10"/>
<use href="#p" x="629.1" y="211.5" width="19.20" height="25.10"/>
<use href="#p" x="565.4" y="213.9" width="19.20" height="25.10"/>
<use href="#p" x="459.9" y="214.9" width="19.20" height="25.10"/>
<use href="#p" x="327.4" y="215.9" width="19.20" height="25.10"/>
<use href="#p" x="378.4" y="219.9" width="19.20" height="25.10"/>
<use href="#p" x="390.7" y="221.5" width="19.20" height="25.10"/>
<use href="#p" x="334.4" y="224.9" width="19.20" height="25.10"/>
<use href="#p" x="290.4" y="226.9" width="19.20" height="25.10"/>
<use href="#p" x="624.9" y="226.9" width="19.20" height="25.10"/>
<use href="#p" x="644.4" y="226.9" width="19.20" height="25.10"/>
<use href="#p" x="631.4" y="227.5" width="19.20" height="25.10"/>
<use href="#p" x="638.4" y="228.9" width="19.20" height="25.10"/>
<use href="#p" x="386.4" y="231.9" width="19.20" height="25.10"/>
<use href="#p" x="643.4" y="231.9" width="19.20" height="25.10"/>
<use href="#p" x="688.6" y="231.9" width="19.20" height="25.10"/>
<use href="#p" x="348.7" y="232.9" width="19.20" height="25.10"/>
<use href="#p" x="568.1" y="234.4" width="19.20" height="25.10"/>
<use href="#p" x="360.4" y="236.9" width="19.20" height="25.10"/>
<use href="#p" x="361.4" y="236.9" width="19.20" height="25.10"/>
<use href="#p" x="459.1" y="237.4" width="19.20" height="25.10"/>
<use href="#p" x="252.1" y="241.5" width="19.20" height="25.10"/>
<use href="#p" x="480.7" y="241.9" width="19.20" height="25.10"/>
<use href="#p" x="402.8" y="243.7" width="19.20" height="25.10"/>
<use href="#p" x="548.1" y="243.7" width="19.20" height="25.10"/>
<use href="#p" x="218.7" y="243.9" width="19.20" height="25.10"/>
<use href="#p" x="600.8" y="243.9" width="19.20" height="25.10"/>
<use href="#p" x="366.4" y="251.9" width="19.20" height="25.10"/>
<use href="#p" x="490.7" y="252.3" width="19.20" height="25.10"/>
<use href="#p" x="610.4" y="252.9" width="19.20" height="25.10"/>
<use href="#p" x="637.1" y="252.9" width="19.20" height="25.10"/>
<use href="#p" x="371.4" y="253.9" width="19.20" height="25.10"/>
<use href="#p" x="401.8" y="259.4" width="19.20" height="25.10"/>
<use href="#p" x="595.4" y="259.9" width="19.20" height="25.10"/>
<use href="#p" x="413.1" y="260.4" width="19.20" height="25.10"/>
<use href="#p" x="374.8" y="262.4" width="19.20" height="25.10"/>
<use href="#p" x="466.9" y="264.9" width="19.20" height="25.10"/>
<use href="#p" x="427.4" y="267.7" width="19.20" height="25.10"/>
<use href="#p" x="559.8" y="267.9" width="19.20" height="25.10"/>
<use href="#p" x="574.4" y="267.9" width="19.20" height="25.10"/>
<use href="#p" x="389.8" y="269.9" width="19.20" height="25.10"/>
<use href="#p" x="588.4" y="270.9" width="19.20" height="25.10"/>
<use href="#p" x="419.1" y="271.9" width="19.20" height="25.10"/>
<use href="#p" x="376.4" y="272.6" width="19.20" height="25.10"/>
<use href="#p" x="533.9" y="273.3" width="19.20" height="25.10"/>
<use href="#p" x="734.4" y="273.9" width="19.20" height="25.10"/>
<use href="#p" x="499.8" y="274.3" width="19.20" height="25.10"/>
<use href="#p" x="666.2" y="277.4" width="19.20" height="25.10"/>
<use href="#p" x="641.4" y="278.9" width="19.20" height="25.10"/>
<use href="#p" x="491.4" y="280.9" width="19.20" height="25.10"/>
<use href="#p" x="634.1" y="280.9" width="19.20" height="25.10"/>
<use href="#p" x="388.1" y="281.9" width="19.20" height="25.10"/>
<use href="#p" x="596.4" y="282.4" width="19.20" height="25.10"/>
<use href="#p" x="477.4" y="287.6" width="19.20" height="25.10"/>
<use href="#p" x="449.1" y="288.3" width="19.20" height="25.10"/>
<use href="#p" x="511.4" y="289.9" width="19.20" height="25.10"/>
<use href="#p" x="601.4" y="290.9" width="19.20" height="25.10"/>
<use href="#p" x="522.4" y="292.6" width="19.20" height="25.10"/>
<use href="#p" x="466.6" y="294.3" width="19.20" height="25.10"/>
<use href="#p" x="441.4" y="298.5" width="19.20" height="25.10"/>
<use href="#p" x="435.8" y="301.9" width="19.20" height="25.10"/>
<use href="#p" x="628.4" y="302.4" width="19.20" height="25.10"/>
<use href="#p" x="413.0" y="310.4" width="19.20" height="25.10"/>
<use href="#p" x="662.4" y="310.9" width="19.20" height="25.10"/>
<use href="#p" x="638.4" y="311.9" width="19.20" height="25.10"/>
<use href="#p" x="459.1" y="316.6" width="19.20" height="25.10"/>
<use href="#p" x="666.4" y="317.9" width="19.20" height="25.10"/>
<use href="#p" x="649.9" y="321.9" width="19.20" height="25.10"/>
<use href="#p" x="515.6" y="323.2" width="19.20" height="25.10"/>
<use href="#p" x="459.4" y="324.9" width="19.20" height="25.10"/>
<use href="#p" x="504.0" y="325.7" width="19.20" height="25.10"/>
<use href="#p" x="449.9" y="325.9" width="19.20" height="25.10"/>
<use href="#p" x="554.2" y="327.3" width="19.20" height="25.10"/>
<use href="#p" x="439.1" y="328.4" width="19.20" height="25.10"/>
<use href="#p" x="419.6" y="332.7" width="19.20" height="25.10"/>
<use href="#p" x="592.9" y="340.4" width="19.20" height="25.10"/>
<use href="#p" x="498.2" y="340.9" width="19.20" height="25.10"/>
<use href="#p" x="667.4" y="342.7" width="19.20" height="25.10"/>
<use href="#p" x="425.8" y="342.9" width="19.20" height="25.10"/>
<use href="#p" x="604.0" y="343.7" width="19.20" height="25.10"/>
<use href="#p" x="570.7" y="347.4" width="19.20" height="25.10"/>
<use href="#p" x="625.7" y="354.7" width="19.20" height="25.10"/>
<use href="#p" x="663.1" y="356.6" width="19.20" height="25.10"/>
<use href="#p" x="554.1" y="359.9" width="19.20" height="25.10"/>
<use href="#p" x="518.4" y="360.9" width="19.20" height="25.10"/>
<use href="#p" x="649.8" y="360.9" width="19.20" height="25.10"/>
<use href="#p" x="530.8" y="363.4" width="19.20" height="25.10"/>
<use href="#p" x="531.4" y="365.6" width="19.20" height="25.10"/>
<use href="#p" x="589.9" y="370.7" width="19.20" height="25.10"/>
<use href="#p" x="600.7" y="371.4" width="19.20" height="25.10"/>
<use href="#p" x="671.4" y="372.9" width="19.20" height="25.10"/>
<use href="#p" x="612.8" y="373.5" width="19.20" height="25.10"/>
<use href="#p" x="560.8" y="377.7" width="19.20" height="25.10"/>
<use href="#p" x="584.1" y="380.7" width="19.20" height="25.10"/>
<use href="#p" x="547.4" y="386.9" width="19.20" height="25.10"/>
<use href="#p" x="619.5" y="386.9" width="19.20" height="25.10"/>
<use href="#p" x="639.8" y="387.3" width="19.20" height="25.10"/>
<use href="#p" x="653.1" y="387.3" width="19.20" height="25.10"/>
<use href="#p" x="531.4" y="391.9" width="19.20" height="25.10"/>
<use href="#p" x="606.4" y="395.6" width="19.20" height="25.10"/>
<use href="#p" x="546.4" y="396.4" width="19.20" height="25.10"/>
<use href="#p" x="603.2" y="397.7" width="19.20" height="25.10"/>
<use href="#p" x="608.2" y="397.7" width="19.20" height="25.10"/>
<use href="#p" x="656.4" y="398.9" width="19.20" height="25.10"/>
<use href="#p" x="657.3" y="400.9" width="19.20" height="25.10"/>
<use href="#p" x="648.1" y="410.9" width="19.20" height="25.10"/>
<use href="#p" x="526.7" y="411.4" width="19.20" height="25.10"/>
<use href="#p" x="568.4" y="413.9" width="19.20" height="25.10"/>
<use href="#p" x="412.0" y="414.9" width="19.20" height="25.10"/>
<use href="#p" x="651.4" y="415.9" width="19.20" height="25.10"/>
<use href="#p" x="540.8" y="421.9" width="19.20" height="25.10"/>
<use href="#p" x="551.4" y="422.4" width="19.20" height="25.10"/>
<use href="#p" x="554.9" y="424.1" width="19.20" height="25.10"/>
<use href="#p" x="648.1" y="425.7" width="19.20" height="25.10"/>
<use href="#p" x="548.4" y="435.9" width="19.20" height="25.10"/>
<use href="#p" x="651.4" y="440.7" width="19.20" height="25.10"/>
<use href="#p" x="560.8" y="441.9" width="19.20" height="25.10"/>
<use href="#p" x="549.9" y="447.6" width="19.20" height="25.10"/>
<use href="#p" x="588.6" y="450.9" width="19.20" height="25.10"/>
<use href="#p" x="648.4" y="452.9" width="19.20" height="25.10"/>
<use href="#p" x="497.5" y="462.9" width="19.20" height="25.10"/>
<use href="#p" x="484.7" y="479.9" width="19.20" height="25.10"/>
<use href="#p" x="497.5" y="479.9" width="19.20" height="25.10"/>
<use href="#p" x="954.9" y="484.4" width="19.20" height="25.10"/>
<use href="#p" x="462.4" y="486.9" width="19.20" height="25.10"/>
<use href="#p" x="491.6" y="492.4" width="19.20" height="25.10"/>
<use href="#p" x="494.1" y="517.9" width="19.20" height="25.10"/>
<circle cx="448.7" cy="337.8" r="3.800" fill="#ff8b94"/>
<circle cx="459.5" cy="335.3" r="3.800" fill="#ff8b94"/>
<circle cx="552.0" cy="92.7" r="3.800" fill="#ff8b94"/>
<circle cx="553.0" cy="98.3" r="3.800" fill="#ff8b94"/>
<circle cx="554.0" cy="114.3" r="3.800" fill="#ff8b94"/>
<circle cx="555.3" cy="124.5" r="3.800" fill="#ff8b94"/>
<circle cx="561.0" cy="431.8" r="3.800" fill="#ff8b94"/>
<circle cx="564.5" cy="433.5" r="3.800" fill="#ff8b94"/>
<circle cx="558.0" cy="445.3" r="3.800" fill="#ff8b94"/>
<circle cx="570.4" cy="451.3" r="3.800" fill="#ff8b94"/>
<circle cx="559.5" cy="457.0" r="3.800" fill="#ff8b94"/>
</svg>
<div class="legend">
<div class="lt" style="top:13.500px">Legend Desa / Dusun</div>
<i class="sw" style="top:36.6px;background:#a8e6cf"></i><span class="li" style="top:35.6px">Datarajan</span>
<i class="sw" style="top:64.0px;background:#ffd3b6"></i><span class="li" style="top:63.0px">Gunung Sari</span>
<i class="sw" style="top:91.5px;background:#ff8b94"></i><span class="li" style="top:90.5px">Ngarip</span>
<i class="sw" style="top:119.0px;background:#bde0fe"></i><span class="li" style="top:118.0px">Penantian</span>
<i class="sw" style="top:146.4px;background:#cdb4db"></i><span class="li" style="top:145.4px">Cikantor</span>
<div class="hr" style="top:172.500px"></div>
<div class="lt" style="top:184px">Lokasi Strategis</div>
<i class="sw dot" style="top:206.6px;background:#1b5e20"></i><span class="li" style="top:205.6px">Kebun Induk</span>
<i class="sw dot" style="top:234.0px;background:#6a1b9a"></i><span class="li" style="top:233.0px">LKC</span>
<i class="sw dot" style="top:261.5px;background:#0d47a1"></i><span class="li" style="top:260.5px">ViH Ngarip</span>
<i class="sw dot" style="top:288.9px;background:#0d47a1"></i><span class="li" style="top:287.9px">VH Harapan Jaya</span>
<i class="sw dot" style="top:316.4px;background:#0d47a1"></i><span class="li" style="top:315.4px">VH Sirna Galih</span>
<i class="sw dot" style="top:343.8px;background:#ef6c00"></i><span class="li" style="top:342.8px">Gudang Natar</span>
<i class="sw dot" style="top:371.3px;background:#263238"></i><span class="li" style="top:370.3px">Markas KGF</span>
<i class="sw dot" style="top:398.7px;background:#6c3483"></i><span class="li" style="top:397.7px">Gudang Tekad</span>
</div>
<div class="zc"><div class="zb"><i style="left:10.200px;top:15.400px;width:14.300px;height:3.200px"></i><i style="left:15.800px;top:9.850px;width:3.200px;height:14.300px"></i></div><div class="zb" style="top:31.900px;border-top:1px solid #ccc"><i style="left:10.200px;top:15.500px;width:14.300px;height:3.200px"></i></div></div>
<div class="lc"><svg width="30" height="30" viewBox="0 0 30 30" style="position:absolute;left:9.300px;top:10px">
<path d="M14.800 10.300L0.200 19.400L14.800 28.500L29.400 19.400Z" fill="#a8a8a8"/>
<path d="M14.800 5.200L0.200 14.300L14.800 23.400L29.400 14.300Z" fill="#c2c2c2"/>
<path d="M14.800 0.700L0.200 9.800L14.800 18.900L29.400 9.800Z" fill="#f0f0f0"/>
<path d="M14.800 5.200L4.100 10.200L14.800 17.200L25.700 10.200Z" fill="#dadada"/>
</svg></div>
<div class="attr"><svg width="13" height="9" viewBox="0 0 12 8" style="position:absolute;left:5.700px;top:5px"><path fill="#4c7be1" d="M0 0h12v4H0z"/><path fill="#ffd500" d="M0 4h12v3.600H0z"/></svg><span>Leaflet</span></div>

 </div></div>
 <div class="note">* Klik icon layer di peta untuk ubah ke mode satelit.</div>
</div>
</body></html>
